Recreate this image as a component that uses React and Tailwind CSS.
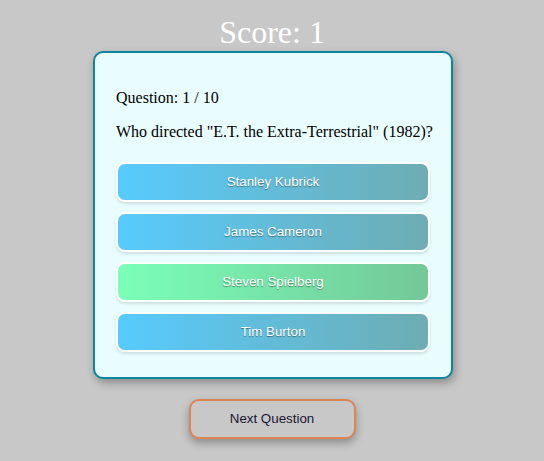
export default function App() {
  const answers = [
    { t: "Stanley Kubrick", ok: false },
    { t: "James Cameron", ok: false },
    { t: "Steven Spielberg", ok: true },
    { t: "Tim Burton", ok: false },
  ];
  return (
    <div className="min-h-[461px] w-full bg-[#c8c8c8] flex flex-col items-center pt-[14px]" style={{ fontFamily: '"Liberation Serif", serif' }}>
      <h1 className="text-[32px] leading-[37px] text-white font-normal">Score: 1</h1>
      <div className="ml-[2px] w-[360px] border-2 border-[#0a879d] rounded-[10px] bg-[#e9fdff] px-[21px] py-[20px] shadow-[2px_4px_8px_rgba(0,0,0,0.3)]">
        <p className="text-[16px] leading-[18px] text-black my-4 whitespace-nowrap">Question: 1 / 10</p>
        <p className="text-[16px] leading-[18px] text-black my-4 whitespace-nowrap">Who directed "E.T. the Extra-Terrestrial" (1982)?</p>
        <div className="flex flex-col gap-[10px] py-[5px]">
          {answers.map((a) => (
            <button
              key={a.t}
              className={
                "block w-full h-10 border-2 border-white rounded-[9px] text-white text-[13.333px] shadow-[0_2px_3px_rgba(0,0,0,0.12)] [text-shadow:0_1px_1px_rgba(0,0,0,0.4)] " +
                (a.ok
                  ? "bg-[linear-gradient(to_right,#7affb9,#73c897)]"
                  : "bg-[linear-gradient(to_right,#57cbfd,#6eacb3)]")
              }
              style={{ fontFamily: '"Liberation Sans", Arial, sans-serif' }}
            >
              {a.t}
            </button>
          ))}
        </div>
      </div>
      <button
        className="mt-[20px] w-[167px] h-[40px] border-2 border-[#de8352] rounded-[10px] bg-[#c8c8c8] text-[13.333px] text-[#1a1530] shadow-[0_4px_8px_rgba(0,0,0,0.3)]"
        style={{ fontFamily: '"Liberation Sans", Arial, sans-serif' }}
      >
        Next Question
      </button>
    </div>
  );
}
